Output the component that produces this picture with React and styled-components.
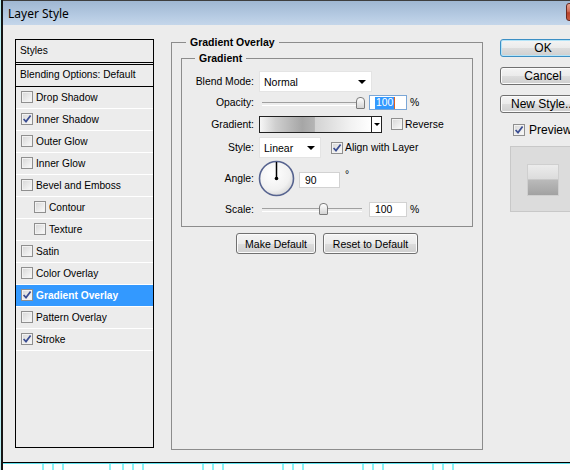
import styled, { createGlobalStyle } from "styled-components";

const GlobalStyle = createGlobalStyle`
  html, body { margin: 0; padding: 0; background: #fff; overflow: hidden; }
  body { font-family: "Liberation Sans", Arial, sans-serif; font-size: 10.4px; color: #000; }
  * { box-sizing: border-box; }
`;

const Screen = styled.div`
  width: 570px;
  height: 470px;
  overflow: hidden;
  border-left: 1px solid #b8eef2;
`;

const Window = styled.div`
  width: 612px;
  border-left: 2px solid #161616;
  display: flex;
  flex-direction: column;
`;

const TitleBar = styled.div`
  height: 25px;
  border-top: 1px solid #3e3e3e;
  background: linear-gradient(#9fb7d2, #b5cae2 60%, #c4d6ea);
  display: flex;
  align-items: flex-start;
  justify-content: space-between;
  padding-left: 5px;
`;

const Title = styled.span`
  font-family: "Noto Sans", sans-serif;
  font-size: 12px;
  line-height: 16px;
  margin-top: 5px;
`;

const CloseButton = styled.div`
  width: 43px;
  height: 18px;
  margin-top: 2px;
  margin-right: 4px;
  border: 1px solid #6a2a20;
  border-radius: 3px;
  background: linear-gradient(#e7a492, #d06f5a 45%, #b9432c 55%, #c75a40);
`;

const Body = styled.div`
  height: 438px;
  background: #ececec;
  border-bottom: 1px solid #000;
  box-shadow: 0 1px 0 #62dfeb;
  display: flex;
  align-items: flex-start;
  padding-left: 12px;
`;

/* ---------- styles list ---------- */

const StylesList = styled.div`
  width: 139px;
  height: 409px;
  margin-top: 14px;
  border: 1px solid #000;
  display: flex;
  flex-direction: column;
`;

const HeadRow = styled.div`
  height: ${(p) => (p.$double ? 25 : 22)}px;
  border-bottom: ${(p) => (p.$double ? "3px double #000" : "1px solid #000")};
  display: flex;
  align-items: center;
  padding: 0 0 2px 4px;
  font-size: 10.2px;
`;

const ItemRow = styled.div`
  height: 22px;
  border-bottom: 1px solid #fff;
  display: flex;
  align-items: center;
  gap: 3px;
  padding-left: ${(p) => (p.$indent ? 18 : 5)}px;
  padding-bottom: 1px;
  font-size: 10.2px;
  background: ${(p) => (p.$selected ? "#3399ff" : "transparent")};
  color: ${(p) => (p.$selected ? "#fff" : "#000")};
  font-weight: ${(p) => (p.$selected ? "bold" : "normal")};
`;

const Box = styled.span`
  width: 12px;
  height: 12px;
  flex: none;
  border: 1px solid #8f8f8f;
  background: linear-gradient(135deg, #d6d6d6, #fbfbfb);
  box-shadow: inset 0 0 0 1px #f2f2f2;
  display: flex;
  align-items: center;
  justify-content: center;
`;

const Checkbox = ({ checked }) => (
  <Box>
    {checked && (
      <svg width="10" height="10" viewBox="0 0 10 10">
        <path d="M1.6 5 L4 7.6 L8.6 1.4" stroke="#3a4d92" strokeWidth="1.7" fill="none" />
      </svg>
    )}
  </Box>
);

/* ---------- group boxes ---------- */

const GroupBox = styled.fieldset`
  margin: ${(p) => (p.$inner ? "0" : "11px 0 0 17px")};
  min-width: 0;
  width: ${(p) => (p.$inner ? 292 : 312)}px;
  height: ${(p) => (p.$inner ? 175 : 414)}px;
  border: 1px solid #8c8c8c;
  padding: ${(p) => (p.$inner ? "7px 0 0 0" : "4px 9px 0 9px")};
`;

const Legend = styled.legend`
  font-weight: bold;
  font-size: 10.5px;
  line-height: 12px;
  padding: 0 4px;
  margin-left: ${(p) => p.$offset}px;
`;

const FormRow = styled.div`
  display: flex;
  align-items: center;
  height: ${(p) => p.$h}px;
`;

const Label = styled.span`
  width: 72px;
  flex: none;
  text-align: right;
  margin-right: 5px;
`;

const SelectBox = styled.div`
  width: ${(p) => p.$w}px;
  height: 21px;
  background: #fff;
  border: 1px solid #e4e4e4;
  display: flex;
  align-items: center;
  justify-content: space-between;
  padding: 0 5px 0 4px;
  font-size: 10.5px;
`;

const Arrow = styled.span`
  width: 0;
  height: 0;
  border-left: ${(p) => p.$s}px solid transparent;
  border-right: ${(p) => p.$s}px solid transparent;
  border-top: ${(p) => p.$s}px solid #000;
`;

const SliderTrack = styled.div`
  position: relative;
  width: 100px;
  height: 14px;
  margin: 0 7px 0 3px;
  &::before {
    content: "";
    position: absolute;
    left: 0;
    right: 0;
    top: 6px;
    height: 2px;
    border-top: 1px solid #a0a0a0;
    border-bottom: 1px solid #fff;
  }
`;

const Thumb = styled.div`
  position: absolute;
  top: 1px;
  width: 9px;
  height: 12px;
  border: 1px solid #7c7c7c;
  border-radius: 4px 4px 1px 1px;
  background: linear-gradient(#fff, #d4d4d4);
`;

const NumberInput = styled.div`
  width: ${(p) => p.$w}px;
  height: ${(p) => p.$h}px;
  margin-top: ${(p) => p.$mt || 0}px;
  background: #fff;
  border: 1px solid ${(p) => (p.$focus ? "#7aa6d6" : "#d2d2d2")};
  display: flex;
  align-items: center;
  padding-left: 5px;
`;

const Selected = styled.span`
  background: #3399ff;
  color: #fff;
  line-height: 12px;
  padding: 0 1px;
`;

const Caret = styled.span`
  width: 1px;
  height: 12px;
  background: #e0601c;
`;

const Unit = styled.span`
  margin-left: ${(p) => p.$ml}px;
  align-self: ${(p) => (p.$raised ? "flex-start" : "center")};
  margin-top: ${(p) => (p.$raised ? 9 : 0)}px;
`;

const GradientField = styled.div`
  width: 123px;
  height: 17px;
  border: 1px solid #222;
  display: flex;
`;

const GradientBar = styled.div`
  flex: 1;
  background: linear-gradient(to right, #f6f6f6 0%, #cfcfcf 14%, #a6a6a6 38%, #b4b4b4 49%, #d3d3d3 50%, #f2f2f2 82%, #fff 100%);
`;

const DropPart = styled.div`
  width: 10px;
  border-left: 1px solid #222;
  background: #fff;
  display: flex;
  align-items: center;
  justify-content: center;
`;

const CheckLabel = styled.label`
  display: flex;
  align-items: center;
  gap: 2px;
  margin-left: ${(p) => p.$ml}px;
`;

const ButtonRow = styled.div`
  display: flex;
  justify-content: center;
  gap: 7px;
  margin-top: 6px;
`;

const Button = styled.button`
  width: ${(p) => p.$w}px;
  height: ${(p) => p.$h || 21}px;
  padding: 0;
  font-family: "Liberation Sans", Arial, sans-serif;
  font-size: ${(p) => p.$fs || 10.5}px;
  color: #000;
  white-space: nowrap;
  overflow: hidden;
  border: 1px solid ${(p) => (p.$default ? "#3c8fc4" : "#707070")};
  border-radius: 3px;
  background: linear-gradient(#f4f4f4 0%, #ebebeb 50%, #dddddd 51%, #cfcfcf 100%);
  box-shadow: inset 0 0 0 1px ${(p) => (p.$default ? "#b4e4f8" : "#fbfbfb")};
`;

/* ---------- right column ---------- */

const SideColumn = styled.div`
  margin: 14px 0 0 17px;
  display: flex;
  flex-direction: column;
  gap: 10px;
`;

const PreviewCheck = styled.label`
  display: flex;
  align-items: center;
  gap: 4px;
  margin-left: 13px;
  font-size: 12px;
`;

const Swatch = styled.div`
  width: 80px;
  height: 66px;
  margin: -1px 0 0 10px;
  background: #dcdcdc;
  border: 1px solid #c8c8c8;
  padding: 17px 0 0 16px;
`;

const SwatchInner = styled.div`
  width: 32px;
  height: 32px;
  border: 1px solid #cfcfcf;
  background: linear-gradient(#ececec, #dcdcdc 46%, #bababa 50%, #a2a2a2);
`;

const Dial = () => (
  <svg width="37" height="37" viewBox="0 0 37 37" style={{ marginLeft: -1 }}>
    <defs>
      <radialGradient id="dialFill" cx="40%" cy="35%" r="70%">
        <stop offset="0%" stopColor="#ffffff" />
        <stop offset="70%" stopColor="#f1f1f1" />
        <stop offset="100%" stopColor="#d6d6d6" />
      </radialGradient>
    </defs>
    <circle cx="18.5" cy="18.5" r="17" fill="url(#dialFill)" stroke="#56638f" strokeWidth="1.6" />
    <line x1="18.5" y1="18.5" x2="18.5" y2="2" stroke="#000" strokeWidth="1.5" />
    <circle cx="18.5" cy="18.5" r="1.8" fill="#000" />
  </svg>
);

const TICKS = [40, 50, 60, 107, 120, 130, 140, 200, 210, 220, 280, 290, 300, 360, 370, 380, 430, 440, 450];

const Ruler = () => (
  <svg width="570" height="6" style={{ display: "block", marginTop: 1 }}>
    {TICKS.map((x) => (
      <rect key={x} x={x - 1} y="0" width="2" height="6" fill="#8af2f5" />
    ))}
  </svg>
);

const LIST = [
  { name: "Drop Shadow" },
  { name: "Inner Shadow", checked: true },
  { name: "Outer Glow" },
  { name: "Inner Glow" },
  { name: "Bevel and Emboss" },
  { name: "Contour", indent: true },
  { name: "Texture", indent: true },
  { name: "Satin" },
  { name: "Color Overlay" },
  { name: "Gradient Overlay", checked: true, selected: true },
  { name: "Pattern Overlay" },
  { name: "Stroke", checked: true },
];

export default function App() {
  return (
    <>
      <GlobalStyle />
      <Screen>
        <Window>
          <TitleBar>
            <Title>Layer Style</Title>
            <CloseButton />
          </TitleBar>
          <Body>
            <StylesList>
              <HeadRow $double>Styles</HeadRow>
              <HeadRow>Blending Options: Default</HeadRow>
              {LIST.map((item) => (
                <ItemRow key={item.name} $indent={item.indent} $selected={item.selected}>
                  <Checkbox checked={item.checked} />
                  {item.name}
                </ItemRow>
              ))}
            </StylesList>

            <GroupBox>
              <Legend $offset={5}>Gradient Overlay</Legend>
              <GroupBox $inner>
                <Legend $offset={13}>Gradient</Legend>
                <FormRow $h={21}>
                  <Label>Blend Mode:</Label>
                  <SelectBox $w={113}>
                    Normal
                    <Arrow $s={4} />
                  </SelectBox>
                </FormRow>
                <FormRow $h={21}>
                  <Label>Opacity:</Label>
                  <SliderTrack>
                    <Thumb style={{ left: 94 }} />
                  </SliderTrack>
                  <NumberInput $w={38} $h={15} $focus>
                    <Selected>100</Selected>
                    <Caret />
                  </NumberInput>
                  <Unit $ml={3}>%</Unit>
                </FormRow>
                <FormRow $h={22}>
                  <Label>Gradient:</Label>
                  <GradientField>
                    <GradientBar />
                    <DropPart>
                      <Arrow $s={3} />
                    </DropPart>
                  </GradientField>
                  <CheckLabel $ml={9}>
                    <Checkbox />
                    Reverse
                  </CheckLabel>
                </FormRow>
                <FormRow $h={25}>
                  <Label>Style:</Label>
                  <SelectBox $w={62}>
                    Linear
                    <Arrow $s={4} />
                  </SelectBox>
                  <CheckLabel $ml={10}>
                    <Checkbox checked />
                    Align with Layer
                  </CheckLabel>
                </FormRow>
                <FormRow $h={37}>
                  <Label>Angle:</Label>
                  <Dial />
                  <NumberInput $w={41} $h={16} $mt={3} style={{ marginLeft: 4 }}>
                    90
                  </NumberInput>
                  <Unit $ml={5} $raised>°</Unit>
                </FormRow>
                <FormRow $h={24}>
                  <Label>Scale:</Label>
                  <SliderTrack>
                    <Thumb style={{ left: 57 }} />
                  </SliderTrack>
                  <NumberInput $w={38} $h={15}>
                    100
                  </NumberInput>
                  <Unit $ml={3}>%</Unit>
                </FormRow>
              </GroupBox>
              <ButtonRow>
                <Button $w={80}>Make Default</Button>
                <Button $w={95}>Reset to Default</Button>
              </ButtonRow>
            </GroupBox>

            <SideColumn>
              <Button $w={86} $h={18} $fs={12} $default>OK</Button>
              <Button $w={86} $h={18} $fs={12}>Cancel</Button>
              <Button $w={86} $h={18} $fs={12}>New Style...</Button>
              <PreviewCheck>
                <Checkbox checked />
                Preview
              </PreviewCheck>
              <Swatch>
                <SwatchInner />
              </Swatch>
            </SideColumn>
          </Body>
          <Ruler />
        </Window>
      </Screen>
    </>
  );
}
